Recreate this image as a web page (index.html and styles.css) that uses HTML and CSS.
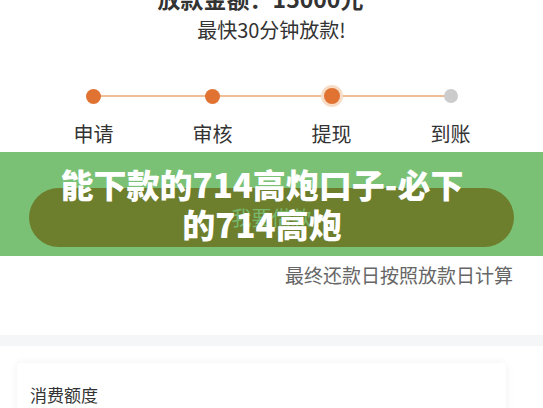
FILE: index.html
```html
<!DOCTYPE html>
<html lang="zh-CN">
<head>
    <meta charset="UTF-8">
    <meta name="viewport" content="width=device-width, initial-scale=1.0">
    <title>能下款的714高炮口子</title>
    <link rel="stylesheet" href="styles.css">
</head>
<body>

    <section class="summary">
        <h2 class="amount">放款金额：15000元</h2>
        <p class="fast">最快30分钟放款!</p>

        <div class="steps">
            <div class="step done"><span class="dot"></span><span class="label">申请</span></div>
            <div class="step done"><span class="dot"></span><span class="label">审核</span></div>
            <div class="step current"><span class="dot"></span><span class="label">提现</span></div>
            <div class="step"><span class="dot"></span><span class="label">到账</span></div>
        </div>

        <a class="borrow" href="#">我要借款</a>
        <p class="note">最终还款日按照放款日计算</p>
    </section>

    <div class="gap"></div>

    <div class="card">
        <h3>消费额度</h3>
    </div>

    <!-- 标题横幅 -->
    <div class="banner">
        <h1>能下款的714高炮口子-必下<br>的714高炮</h1>
    </div>

</body>
</html>
```

FILE: styles.css
```css
body {
    font-family: "Noto Sans CJK SC", "Noto Sans", sans-serif;
    margin: 0;
    padding: 0;
    background-color: white;
    color: #333;
    position: relative;
    overflow: hidden;
}
.summary {
    text-align: center;
    padding-bottom: 48px;
}
.amount {
    margin: -17px 0 0;
    padding-right: 22px;
    font-size: 23px;
    line-height: 30px;
    font-weight: bold;
    color: #333;
}
.fast {
    margin: 4px 0 0;
    font-size: 20px;
    line-height: 26px;
    color: #333;
}
.steps {
    display: grid;
    grid-template-columns: repeat(4, 119px);
    margin: 43px 0 0 34px;
}
.step {
    position: relative;
    display: flex;
    flex-direction: column;
    align-items: center;
}
.step::before {
    content: "";
    position: absolute;
    top: 9px;
    left: 50%;
    width: 119px;
    height: 2px;
    background-color: #f0bd94;
}
.step:last-child::before {
    display: none;
}
.dot {
    position: relative;
    width: 14px;
    height: 14px;
    margin: 3px 0;
    border-radius: 50%;
    background-color: #cccccc;
}
.step.done .dot {
    width: 15px;
    height: 15px;
    margin: 2.5px 0;
    background-color: #e07332;
}
.step.current .dot {
    width: 16px;
    height: 16px;
    margin: 2px 0;
    background-color: #e07332;
    box-shadow: 0 0 0 3px #f8dcc6;
}
.label {
    margin-top: 14px;
    font-size: 20px;
    line-height: 28px;
    color: #333;
}
.borrow {
    display: block;
    margin: 40px 29px 0;
    height: 59px;
    line-height: 59px;
    border-radius: 30px;
    background-color: #df5948;
    color: #f4e8e4;
    font-size: 20px;
    text-decoration: none;
}
.note {
    margin: 16px 0 0;
    padding-right: 30px;
    text-align: right;
    font-size: 19px;
    line-height: 24px;
    color: #666;
}
.gap {
    height: 11px;
    background-color: #f5f6f8;
}
.card {
    margin: 17px 37px 0 17px;
    padding: 18px 13px 30px;
    background-color: white;
    border-radius: 4px;
    box-shadow: 0 0 10px rgba(0, 0, 0, 0.06);
}
.card h3 {
    margin: 0;
    font-size: 17px;
    line-height: 28px;
    font-weight: normal;
    color: #333;
}
.banner {
    position: absolute;
    top: 152px;
    left: 0;
    right: 0;
    height: 104px;
    display: flex;
    align-items: center;
    justify-content: center;
    background-color: rgba(33, 152, 27, 0.6);
}
.banner h1 {
    margin: 0;
    padding-right: 19px;
    text-align: center;
    color: white;
    font-size: 33px;
    line-height: 40px;
    font-weight: 900;
}
```
